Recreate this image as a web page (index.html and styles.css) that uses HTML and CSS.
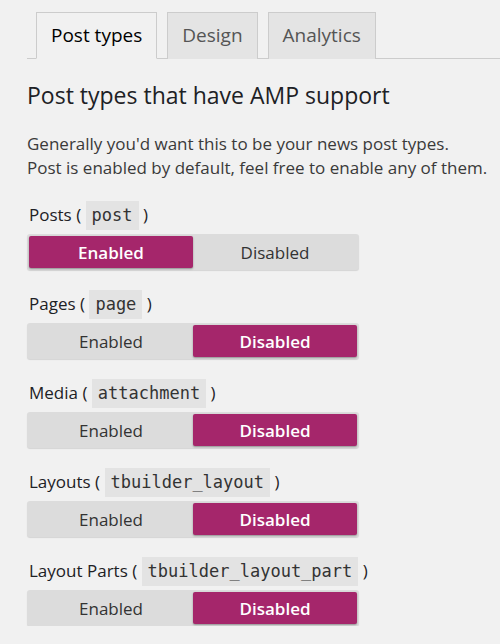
FILE: index.html
```html
<!DOCTYPE html>
<html>
<head>
<meta charset="utf-8">
<link rel="stylesheet" href="styles.css">
</head>
<body>
<div class="page">
  <nav class="tabs">
    <a class="tab active">Post types</a>
    <a class="tab">Design</a>
    <a class="tab">Analytics</a>
  </nav>
  <h2 class="title">Post types that have AMP support</h2>
  <p class="desc">Generally you'd want this to be your news post types.<br>Post is enabled by default, feel free to enable any of them.</p>
  <div class="groups">
    <div class="group">
      <div class="label">Posts ( <code>post</code> )</div>
      <div class="toggle"><span class="opt on">Enabled</span><span class="opt">Disabled</span></div>
    </div>
    <div class="group">
      <div class="label">Pages ( <code>page</code> )</div>
      <div class="toggle"><span class="opt">Enabled</span><span class="opt on">Disabled</span></div>
    </div>
    <div class="group">
      <div class="label">Media ( <code>attachment</code> )</div>
      <div class="toggle"><span class="opt">Enabled</span><span class="opt on">Disabled</span></div>
    </div>
    <div class="group">
      <div class="label">Layouts ( <code>tbuilder_layout</code> )</div>
      <div class="toggle"><span class="opt">Enabled</span><span class="opt on">Disabled</span></div>
    </div>
    <div class="group">
      <div class="label">Layout Parts ( <code>tbuilder_layout_part</code> )</div>
      <div class="toggle"><span class="opt">Enabled</span><span class="opt on">Disabled</span></div>
    </div>
  </div>
</div>
</body>
</html>
```

FILE: styles.css
```css
html, body {
  margin: 0;
  padding: 0;
  background: #f1f1f1;
}
body {
  font-family: "Open Sans", "Noto Sans", sans-serif;
  color: #23282d;
}
.page {
  padding: 12px 0 0 27px;
}
.tabs {
  display: flex;
  gap: 10px;
  padding-left: 9px;
  height: 46px;
  border-bottom: 1px solid #cccccc;
  align-items: flex-end;
}
.tab {
  display: flex;
  align-items: center;
  box-sizing: border-box;
  height: 47px;
  padding: 0 14px 2px;
  border: 1px solid #cccccc;
  border-bottom: none;
  background: #e4e4e4;
  color: #555;
  font-size: 19px;
  margin-bottom: -1px;
}
.tab.active {
  background: #f1f1f1;
  color: #000;
  border-bottom: 1px solid #f1f1f1;
}
.title {
  margin: 22px 0 0;
  font-size: 23px;
  font-weight: 400;
  line-height: 28px;
  color: #1d2125;
}
.desc {
  margin: 23px 0 0;
  font-size: 17px;
  line-height: 24px;
  color: #3a3a3a;
}
.groups {
  margin-top: 21px;
  display: flex;
  flex-direction: column;
  gap: 20px;
}
.group {
  display: flex;
  flex-direction: column;
  gap: 5px;
}
.label {
  font-size: 17px;
  line-height: 28px;
  height: 28px;
  color: #1d2125;
  padding-left: 2px;
}
.label code {
  font-family: "DejaVu Sans Mono", "Liberation Mono", monospace;
  font-size: 17px;
  background: #e3e3e3;
  padding: 4px 6px 5px;
  color: #333;
}
.toggle {
  display: flex;
  width: 332px;
  height: 36px;
  box-sizing: border-box;
  padding: 2px;
  background: #dcdcdc;
  border-radius: 3px;
  box-shadow: 0 1px 1px rgba(0,0,0,0.12);
}
.opt {
  flex: 1;
  display: flex;
  align-items: center;
  justify-content: center;
  font-size: 17px;
  color: #333;
  border-radius: 2px;
}
.opt.on {
  background: #a5266b;
  color: #fff;
  font-weight: 600;
  box-shadow: 0 1px 2px rgba(0,0,0,0.35);
}
```
